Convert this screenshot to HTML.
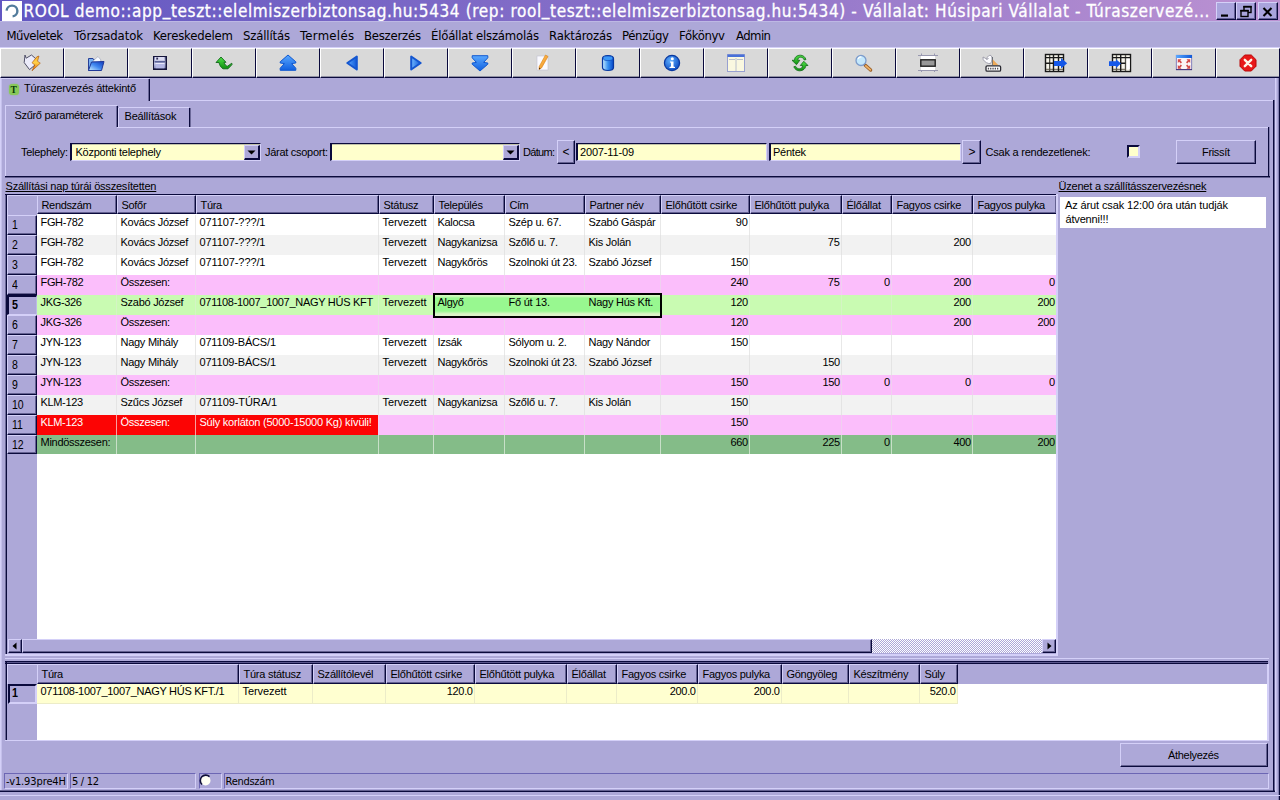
<!DOCTYPE html>
<html lang="hu"><head><meta charset="utf-8"><title>ROOL demo - Túraszervezés áttekintő</title>
<style>
html,body{margin:0;padding:0;}
body{width:1280px;height:800px;overflow:hidden;background:#ADA8D8;font-family:"Liberation Sans",sans-serif;font-size:11px;color:#000;position:relative;}
body div{position:absolute;box-sizing:border-box;}
.t{position:absolute;white-space:pre;}
svg{position:absolute;overflow:visible;}
</style></head><body>
<div style="left:0px;top:0px;width:1280px;height:21px;background:linear-gradient(90deg,#6257C2 0%,#8870C8 50%,#BC92D2 100%);"></div><div style="left:2px;top:1px;width:20px;height:20px;background:#fff;"></div><svg style="left:2px;top:1px" width="20" height="20" viewBox="0 0 20 20"><path d="M4.6 9.6 A5.4 5.4 0 1 1 10.6 15.4" fill="none" stroke="#527C9C" stroke-width="2.4"/></svg><span class="t" style="left:23.50px;top:0.62px;line-height:21px;font-size:17px;color:#fff;font-family:'DejaVu Sans Condensed','Liberation Sans',sans-serif;letter-spacing:0.617px;-webkit-text-stroke:.3px #fff;">ROOL demo::app<span style="position:relative;top:-1.5px">_</span>teszt::elelmiszerbiztonsag.hu:5434 (rep: rool<span style="position:relative;top:-1.5px">_</span>teszt::elelmiszerbiztonsag.hu:5434) - Vállalat: Húsipari Vállalat - Túraszervezé...</span><div style="left:0px;top:21px;width:1280px;height:1px;background:#BDB8E4;"></div><div style="left:1216px;top:2px;width:20px;height:18px;background:#A9A4DC;border-top:1px solid #D4D0F8;border-left:1px solid #D4D0F8;border-bottom:1px solid #0A0A3C;border-right:1px solid #0A0A3C;box-shadow:inset -1px -1px 0 rgba(10,10,60,.45);"></div><div style="left:1236px;top:2px;width:20px;height:18px;background:#A9A4DC;border-top:1px solid #D4D0F8;border-left:1px solid #D4D0F8;border-bottom:1px solid #0A0A3C;border-right:1px solid #0A0A3C;box-shadow:inset -1px -1px 0 rgba(10,10,60,.45);"></div><div style="left:1258px;top:2px;width:20px;height:18px;background:#A9A4DC;border-top:1px solid #D4D0F8;border-left:1px solid #D4D0F8;border-bottom:1px solid #0A0A3C;border-right:1px solid #0A0A3C;box-shadow:inset -1px -1px 0 rgba(10,10,60,.45);"></div><svg style="left:1216px;top:2.5px" width="64" height="17" viewBox="0 0 64 17"><rect x="5" y="11.5" width="7" height="2.2" fill="#000"/><rect x="28" y="3.5" width="7" height="6" fill="none" stroke="#000" stroke-width="1.4"/><rect x="27.3" y="3" width="8.4" height="1.6" fill="#000"/><rect x="25" y="7.5" width="7" height="6" fill="#A9A4DC" stroke="#000" stroke-width="1.4"/><rect x="24.3" y="7" width="8.4" height="1.6" fill="#000"/><path d="M47.5 5 L55.5 13 M55.5 5 L47.5 13" stroke="#000" stroke-width="2.1"/></svg><span class="t" style="left:6.50px;top:26.50px;line-height:17px;font-size:13px;color:#000;font-family:'DejaVu Sans Condensed','Liberation Sans',sans-serif;letter-spacing:-0.518px;">Műveletek</span><span class="t" style="left:74.00px;top:26.50px;line-height:17px;font-size:13px;color:#000;font-family:'DejaVu Sans Condensed','Liberation Sans',sans-serif;letter-spacing:-0.091px;">Törzsadatok</span><span class="t" style="left:153.00px;top:26.50px;line-height:17px;font-size:13px;color:#000;font-family:'DejaVu Sans Condensed','Liberation Sans',sans-serif;letter-spacing:-0.183px;">Kereskedelem</span><span class="t" style="left:243.00px;top:26.50px;line-height:17px;font-size:13px;color:#000;font-family:'DejaVu Sans Condensed','Liberation Sans',sans-serif;letter-spacing:-0.166px;">Szállítás</span><span class="t" style="left:300.00px;top:26.50px;line-height:17px;font-size:13px;color:#000;font-family:'DejaVu Sans Condensed','Liberation Sans',sans-serif;letter-spacing:0.308px;">Termelés</span><span class="t" style="left:364.00px;top:26.50px;line-height:17px;font-size:13px;color:#000;font-family:'DejaVu Sans Condensed','Liberation Sans',sans-serif;letter-spacing:-0.236px;">Beszerzés</span><span class="t" style="left:431.00px;top:26.50px;line-height:17px;font-size:13px;color:#000;font-family:'DejaVu Sans Condensed','Liberation Sans',sans-serif;letter-spacing:-0.213px;">Élőállat elszámolás</span><span class="t" style="left:549.00px;top:26.50px;line-height:17px;font-size:13px;color:#000;font-family:'DejaVu Sans Condensed','Liberation Sans',sans-serif;letter-spacing:-0.179px;">Raktározás</span><span class="t" style="left:622.00px;top:26.50px;line-height:17px;font-size:13px;color:#000;font-family:'DejaVu Sans Condensed','Liberation Sans',sans-serif;letter-spacing:-0.352px;">Pénzügy</span><span class="t" style="left:679.00px;top:26.50px;line-height:17px;font-size:13px;color:#000;font-family:'DejaVu Sans Condensed','Liberation Sans',sans-serif;letter-spacing:-0.357px;">Főkönyv</span><span class="t" style="left:736.00px;top:26.50px;line-height:17px;font-size:13px;color:#000;font-family:'DejaVu Sans Condensed','Liberation Sans',sans-serif;letter-spacing:-0.566px;">Admin</span><div style="left:0px;top:47px;width:1280px;height:1px;background:#D4D0F8;"></div><div style="left:0px;top:48px;width:64px;height:30px;background:#D9D9D9;border-top:1px solid #fff;border-left:1px solid #fff;border-right:1px solid #0A0A3C;border-bottom:1px solid #0A0A3C;box-shadow:inset 0 -1px 0 rgba(10,10,60,.35);"></div><div style="left:64px;top:48px;width:64px;height:30px;background:#D9D9D9;border-top:1px solid #fff;border-left:1px solid #fff;border-right:1px solid #0A0A3C;border-bottom:1px solid #0A0A3C;box-shadow:inset 0 -1px 0 rgba(10,10,60,.35);"></div><div style="left:128px;top:48px;width:64px;height:30px;background:#D9D9D9;border-top:1px solid #fff;border-left:1px solid #fff;border-right:1px solid #0A0A3C;border-bottom:1px solid #0A0A3C;box-shadow:inset 0 -1px 0 rgba(10,10,60,.35);"></div><div style="left:192px;top:48px;width:64px;height:30px;background:#D9D9D9;border-top:1px solid #fff;border-left:1px solid #fff;border-right:1px solid #0A0A3C;border-bottom:1px solid #0A0A3C;box-shadow:inset 0 -1px 0 rgba(10,10,60,.35);"></div><div style="left:256px;top:48px;width:64px;height:30px;background:#D9D9D9;border-top:1px solid #fff;border-left:1px solid #fff;border-right:1px solid #0A0A3C;border-bottom:1px solid #0A0A3C;box-shadow:inset 0 -1px 0 rgba(10,10,60,.35);"></div><div style="left:320px;top:48px;width:64px;height:30px;background:#D9D9D9;border-top:1px solid #fff;border-left:1px solid #fff;border-right:1px solid #0A0A3C;border-bottom:1px solid #0A0A3C;box-shadow:inset 0 -1px 0 rgba(10,10,60,.35);"></div><div style="left:384px;top:48px;width:64px;height:30px;background:#D9D9D9;border-top:1px solid #fff;border-left:1px solid #fff;border-right:1px solid #0A0A3C;border-bottom:1px solid #0A0A3C;box-shadow:inset 0 -1px 0 rgba(10,10,60,.35);"></div><div style="left:448px;top:48px;width:64px;height:30px;background:#D9D9D9;border-top:1px solid #fff;border-left:1px solid #fff;border-right:1px solid #0A0A3C;border-bottom:1px solid #0A0A3C;box-shadow:inset 0 -1px 0 rgba(10,10,60,.35);"></div><div style="left:512px;top:48px;width:64px;height:30px;background:#D9D9D9;border-top:1px solid #fff;border-left:1px solid #fff;border-right:1px solid #0A0A3C;border-bottom:1px solid #0A0A3C;box-shadow:inset 0 -1px 0 rgba(10,10,60,.35);"></div><div style="left:576px;top:48px;width:64px;height:30px;background:#D9D9D9;border-top:1px solid #fff;border-left:1px solid #fff;border-right:1px solid #0A0A3C;border-bottom:1px solid #0A0A3C;box-shadow:inset 0 -1px 0 rgba(10,10,60,.35);"></div><div style="left:640px;top:48px;width:64px;height:30px;background:#D9D9D9;border-top:1px solid #fff;border-left:1px solid #fff;border-right:1px solid #0A0A3C;border-bottom:1px solid #0A0A3C;box-shadow:inset 0 -1px 0 rgba(10,10,60,.35);"></div><div style="left:704px;top:48px;width:64px;height:30px;background:#D9D9D9;border-top:1px solid #fff;border-left:1px solid #fff;border-right:1px solid #0A0A3C;border-bottom:1px solid #0A0A3C;box-shadow:inset 0 -1px 0 rgba(10,10,60,.35);"></div><div style="left:768px;top:48px;width:64px;height:30px;background:#D9D9D9;border-top:1px solid #fff;border-left:1px solid #fff;border-right:1px solid #0A0A3C;border-bottom:1px solid #0A0A3C;box-shadow:inset 0 -1px 0 rgba(10,10,60,.35);"></div><div style="left:832px;top:48px;width:64px;height:30px;background:#D9D9D9;border-top:1px solid #fff;border-left:1px solid #fff;border-right:1px solid #0A0A3C;border-bottom:1px solid #0A0A3C;box-shadow:inset 0 -1px 0 rgba(10,10,60,.35);"></div><div style="left:896px;top:48px;width:64px;height:30px;background:#D9D9D9;border-top:1px solid #fff;border-left:1px solid #fff;border-right:1px solid #0A0A3C;border-bottom:1px solid #0A0A3C;box-shadow:inset 0 -1px 0 rgba(10,10,60,.35);"></div><div style="left:960px;top:48px;width:64px;height:30px;background:#D9D9D9;border-top:1px solid #fff;border-left:1px solid #fff;border-right:1px solid #0A0A3C;border-bottom:1px solid #0A0A3C;box-shadow:inset 0 -1px 0 rgba(10,10,60,.35);"></div><div style="left:1024px;top:48px;width:64px;height:30px;background:#D9D9D9;border-top:1px solid #fff;border-left:1px solid #fff;border-right:1px solid #0A0A3C;border-bottom:1px solid #0A0A3C;box-shadow:inset 0 -1px 0 rgba(10,10,60,.35);"></div><div style="left:1088px;top:48px;width:64px;height:30px;background:#D9D9D9;border-top:1px solid #fff;border-left:1px solid #fff;border-right:1px solid #0A0A3C;border-bottom:1px solid #0A0A3C;box-shadow:inset 0 -1px 0 rgba(10,10,60,.35);"></div><div style="left:1152px;top:48px;width:64px;height:30px;background:#D9D9D9;border-top:1px solid #fff;border-left:1px solid #fff;border-right:1px solid #0A0A3C;border-bottom:1px solid #0A0A3C;box-shadow:inset 0 -1px 0 rgba(10,10,60,.35);"></div><div style="left:1216px;top:48px;width:64px;height:30px;background:#D9D9D9;border-top:1px solid #fff;border-left:1px solid #fff;border-right:1px solid #0A0A3C;border-bottom:1px solid #0A0A3C;box-shadow:inset 0 -1px 0 rgba(10,10,60,.35);"></div><svg style="left:0;top:48px" width="1280" height="30" viewBox="0 48 1280 30"><defs><linearGradient id="gb" x1="0" y1="0" x2="0" y2="1"><stop offset="0" stop-color="#5AA8FF"/><stop offset="1" stop-color="#1060E0"/></linearGradient><linearGradient id="gbh" x1="0" y1="0" x2="1" y2="0"><stop offset="0" stop-color="#5AA8FF"/><stop offset="1" stop-color="#1058D8"/></linearGradient><linearGradient id="gbh2" x1="0" y1="0" x2="1" y2="0"><stop offset="0" stop-color="#70B8FF"/><stop offset="1" stop-color="#1058D8"/></linearGradient><linearGradient id="gbolt" x1="0" y1="0" x2="0" y2="1"><stop offset="0" stop-color="#F8B030"/><stop offset=".45" stop-color="#FFD048"/><stop offset="1" stop-color="#E06000"/></linearGradient><linearGradient id="gg" x1="0" y1="0" x2="0" y2="1"><stop offset="0" stop-color="#50E048"/><stop offset="1" stop-color="#109010"/></linearGradient><linearGradient id="gf" x1="0" y1="0" x2="0" y2="1"><stop offset="0" stop-color="#7078A8"/><stop offset=".5" stop-color="#C8CCE8"/><stop offset="1" stop-color="#8088B8"/></linearGradient><linearGradient id="gfo" x1="0" y1="1" x2="1" y2="0"><stop offset="0" stop-color="#D0F0FF"/><stop offset=".5" stop-color="#4088F0"/><stop offset="1" stop-color="#1038B8"/></linearGradient><radialGradient id="gi" cx=".4" cy=".35" r=".7"><stop offset="0" stop-color="#60B0FF"/><stop offset="1" stop-color="#0848C0"/></radialGradient><linearGradient id="gc" x1="0" y1="0" x2="1" y2="0"><stop offset="0" stop-color="#C8ECFF"/><stop offset=".5" stop-color="#3890F0"/><stop offset="1" stop-color="#0848C8"/></linearGradient><linearGradient id="go" x1="0" y1="0" x2="1" y2="1"><stop offset="0" stop-color="#FFD868"/><stop offset="1" stop-color="#F07810"/></linearGradient></defs><path d="M25 55 L26.2 58.2 L31.5 55 L35.5 58.5 L35 65 L29.5 69.6 L24.2 62.6 Z" fill="#ECECFA" stroke="#505068" stroke-width="1"/><path d="M36.8 56.8 L39 56 L37.5 61.2 L40.3 63.2 L32 70.8 L34.8 65 L32 62.8 Z" fill="url(#gbolt)" stroke="#A85008" stroke-width=".6"/><path d="M88.5 58.5 L93 58.5 L94 60 L100 60 L100 70.5 L88.5 70.5 Z" fill="#78B0F0" stroke="#284098" stroke-width="1"/><path d="M92.5 61.5 L98 56.5 L101 60 L100 63 Z" fill="#F8FAFF" stroke="#8890A8" stroke-width=".5"/><path d="M91.5 62 L104 61.5 L101.5 70.5 L88.5 70.5 Z" fill="url(#gfo)" stroke="#203898" stroke-width="1"/><rect x="153" y="56" width="14" height="14" fill="#15153A"/><rect x="154" y="57" width="11.5" height="11.3" fill="url(#gf)"/><rect x="155" y="57" width="9.5" height="3.6" fill="#DCDCF2"/><rect x="156.3" y="57.6" width="1.8" height="2" fill="#303058"/><rect x="154.5" y="61" width="10.5" height="1.6" fill="#5C6498"/><rect x="155.5" y="63" width="8.8" height="5.3" fill="#B4B8E4"/><rect x="155.5" y="63" width="8.8" height="1" fill="#E8E8FA"/><path d="M221 57 L226 62.3 L224 62.3 C224.5 64.5 226 66 227.6 66.2 L231.8 63.2 L232 64.6 L228 68.8 L223 68.8 C220.5 67 219.5 65 219 62.5 L216 62.5 Z" fill="url(#gg)" stroke="#106818" stroke-width=".9" stroke-linejoin="round"/><path d="M288 55 L295.8 61.8 L295.8 63 L291.6 63.6 L295.8 68.2 L295.8 70.3 L280.2 70.3 L280.2 68.2 L284.4 63.6 L280.2 63 L280.2 61.8 Z" fill="url(#gb)" stroke="#1058D0" stroke-width="1" stroke-linejoin="round"/><path d="M347.3 63 L356.8 56.5 L356.8 69.5 Z" fill="url(#gbh)" stroke="#1456D0" stroke-width="2" stroke-linejoin="round"/><path d="M420.7 63 L411.2 56.5 L411.2 69.5 Z" fill="url(#gbh2)" stroke="#1456D0" stroke-width="2" stroke-linejoin="round"/><path d="M480 71 L472.2 64.2 L472.2 63 L476.4 62.4 L472.2 57.8 L472.2 55.7 L487.8 55.7 L487.8 57.8 L483.6 62.4 L487.8 63 L487.8 64.2 Z" fill="url(#gb)" stroke="#1058D0" stroke-width="1" stroke-linejoin="round"/><rect x="537" y="56" width="11" height="14" fill="#FAFAFF" stroke="#C0C0D0" stroke-width=".6"/><path d="M545.5 55 L548 56.5 L541.5 68 L539 69.5 L539.2 66.5 Z" fill="url(#go)" stroke="#D88010" stroke-width=".6"/><path d="M539 69.5 L539.2 67.5 L540.6 68.4Z" fill="#402000"/><path d="M602.5 58.5 C602.5 54.5 613.5 54.5 613.5 58.5 L613.5 67.5 C613.5 71.5 602.5 71.5 602.5 67.5 Z" fill="url(#gc)" stroke="#0838A0" stroke-width="1.2"/><ellipse cx="608" cy="58.3" rx="4.8" ry="2.3" fill="#3C98F8" stroke="#0840B0" stroke-width=".6"/><circle cx="672" cy="63" r="7.6" fill="url(#gi)" stroke="#0838A0" stroke-width="1.2"/><circle cx="672.3" cy="58.7" r="1.5" fill="#fff"/><path d="M670 61.5 L673.5 61.5 L673.5 66.5 L675 67 L675 68 L669.5 68 L669.5 67 L671 66.5 L671 62.8 L670 62.5Z" fill="#fff"/><rect x="727.5" y="54.5" width="17" height="17" fill="#FAF8E0" stroke="#98A0D0" stroke-width="1"/><rect x="727.5" y="54.5" width="17" height="2.5" fill="#4870D8"/><path d="M736 58 V71 M729 59.5 H735 M737 59.5 H743" stroke="#A8B0C8" stroke-width=".8"/><path d="M792 60.3 L794.5 60.3 C794.5 57 797 55.2 800.5 55.2 C803 55.2 805 56.8 806 59.5 L804.3 60 C803.5 58 802 57.2 800.5 57.2 C798.5 57.2 797.8 58.5 797.8 60.3 L799.8 60.3 L796.5 64.7 Z" fill="url(#gg)" stroke="#106818" stroke-width=".8" stroke-linejoin="round"/><path d="M808 65.5 L805.8 65.5 C805.8 68.5 803 70.8 799.5 70.8 C797 70.8 795 69.5 793.8 66.8 L795.5 66.2 C796.5 68 798 68.8 799.5 68.8 C801.5 68.8 802.5 67.5 802.5 65.5 L800.3 65.5 L803.8 61.3 Z" fill="url(#gg)" stroke="#106818" stroke-width=".8" stroke-linejoin="round"/><path d="M865.3 65.3 L870.6 70" stroke="#9C6028" stroke-width="3.4" stroke-linecap="round"/><path d="M865.8 65.8 L870.4 69.8" stroke="#F0B468" stroke-width="1.7" stroke-linecap="round"/><circle cx="861" cy="60.5" r="5" fill="#C4E8FC" stroke="#7C9CCC" stroke-width="1.3"/><path d="M858 59 A3.4 3.4 0 0 1 861.5 57" stroke="#fff" stroke-width="1.2" fill="none"/><path d="M918 55.5 H938 M918 70.5 H938 M921.5 53.5 V72 M934.5 53.5 V72" stroke="#9898B0" stroke-width="1"/><rect x="921" y="56" width="14" height="14" fill="#fff"/><rect x="920.8" y="59.8" width="14.4" height="6.4" fill="#989898" stroke="#202020" stroke-width="1.4"/><path d="M983 57 C984.5 57.5 985.5 58.5 986.5 59 C987.5 56 989.5 54.8 991 55.5 C992.5 57 992.3 61 990.5 63.5 C988 64 984.5 62 983.2 59.5 Z" fill="#FCFCFF" stroke="#9090A0" stroke-width=".8"/><path d="M986.5 59.5 L988.5 58.5" stroke="#707080" stroke-width=".8"/><path d="M992.5 57 V65" stroke="#505860" stroke-width=".8"/><path d="M992.8 59.5 L998.5 65.3 L992.8 65.3 Z" fill="#F0A040" opacity=".85"/><rect x="986" y="65.8" width="14.6" height="5.4" rx="1.2" fill="#fff" stroke="#282830" stroke-width="1.3"/><path d="M987.8 68.6 H999" stroke="#505058" stroke-width="1.6" stroke-dasharray="1.3 1"/><rect x="1045.5" y="54.5" width="18" height="17" fill="#F6F4EA" stroke="#181818" stroke-width="1.4"/><rect x="1049" y="55" width="1.3" height="16" fill="#505048"/><path d="M1046 69.3 H1063" stroke="#605848" stroke-width="1"/><path d="M1045 57.6 H1064 M1045 63.3 H1064 M1053.5 54 V72 M1058.5 54 V72" stroke="#181818" stroke-width="1.4"/><path d="M1054 61 L1061 61 L1061 58 L1067.2 63.3 L1061 68.6 L1061 66 L1054 66 Z" fill="#1458E8"/><rect x="1112.5" y="54.5" width="18" height="17" fill="#F6F4EA" stroke="#181818" stroke-width="1.4"/><rect x="1126.2" y="58.3" width="3.6" height="10.7" fill="#fff"/><path d="M1116.5 55 V71 M1125.5 55 V71" stroke="#505048" stroke-width="1.3"/><path d="M1113 69.3 H1126" stroke="#605848" stroke-width="1"/><path d="M1112 57.6 H1131 M1121 63.3 H1125.5 M1120.7 54 V72" stroke="#181818" stroke-width="1.4"/><path d="M1109 61.3 L1116 61.3 L1116 59.3 L1121 63.6 L1116 68 L1116 66 L1109 66 Z" fill="#1458E8"/><rect x="1176.3" y="55.3" width="15.4" height="14.4" fill="#FBF4F6" stroke="#6868B0" stroke-width=".8"/><rect x="1176" y="55" width="16" height="3" fill="url(#gbh)"/><path d="M1176 69.6 H1192" stroke="#403078" stroke-width="1"/><g fill="#D03838" opacity=".9"><path d="M1177.8 59.3 L1181.5 59.3 L1180.3 60.6 L1182 62.3 L1180.8 63.5 L1179.1 61.8 L1177.8 63 Z"/><path d="M1190.2 59.3 L1186.5 59.3 L1187.7 60.6 L1186 62.3 L1187.2 63.5 L1188.9 61.8 L1190.2 63 Z"/><path d="M1177.8 68.7 L1181.5 68.7 L1180.3 67.4 L1182 65.7 L1180.8 64.5 L1179.1 66.2 L1177.8 65 Z"/><path d="M1190.2 68.7 L1186.5 68.7 L1187.7 67.4 L1186 65.7 L1187.2 64.5 L1188.9 66.2 L1190.2 65 Z"/></g><path d="M1244.7 55 L1251.3 55 L1256 59.7 L1256 66.3 L1251.3 71 L1244.7 71 L1240 66.3 L1240 59.7 Z" fill="#E81818" stroke="#B80808" stroke-width="1"/><path d="M1244.8 59.8 L1251.2 66.2 M1251.2 59.8 L1244.8 66.2" stroke="#FFF4E8" stroke-width="2.4" stroke-linecap="round"/></svg><div style="left:0px;top:78px;width:1px;height:712px;background:#D4D0F8;"></div><div style="left:1px;top:78px;width:1px;height:712px;background:rgba(212,208,248,.6);"></div><div style="left:149px;top:100px;width:1125px;height:1px;background:#D4D0F8;"></div><div style="left:1273px;top:100px;width:1px;height:691px;background:#0A0A3C;"></div><div style="left:1274px;top:100px;width:1px;height:691px;background:rgba(10,10,60,.45);"></div><div style="left:1275px;top:78px;width:1px;height:714px;background:#D4D0F8;"></div><div style="left:1276px;top:78px;width:1px;height:714px;background:rgba(212,208,248,.45);"></div><div style="left:1279px;top:78px;width:1px;height:722px;background:#0A0A3C;"></div><div style="left:1278px;top:78px;width:1px;height:722px;background:rgba(10,10,60,.25);"></div><div style="left:0px;top:78px;width:149px;height:1px;background:#D4D0F8;"></div><div style="left:148px;top:79px;width:1px;height:22px;background:rgba(10,10,60,.4);"></div><div style="left:149px;top:79px;width:1px;height:22px;background:#0A0A3C;"></div><div style="left:8.5px;top:84px;width:10px;height:11px;background:#84CC4C;border-radius:3.5px;box-shadow:0 0 1.5px #84CC4C;opacity:.9;"></div><span class="t" style="left:10.40px;top:84.34px;line-height:13.5px;font-size:9.5px;color:#083808;font-family:'Liberation Serif',serif;font-weight:bold;">T</span><span class="t" style="left:24.00px;top:81.19px;line-height:15px;font-size:11px;color:#000;letter-spacing:-0.217px;">Túraszervezés áttekintő</span><div style="left:117px;top:127px;width:1151px;height:1px;background:#D4D0F8;"></div><div style="left:5px;top:105px;width:1px;height:72px;background:#D4D0F8;"></div><div style="left:5px;top:176px;width:1265px;height:1px;background:#0A0A3C;"></div><div style="left:5px;top:177px;width:1265px;height:1px;background:rgba(10,10,60,.45);"></div><div style="left:1268px;top:127px;width:1px;height:50px;background:#0A0A3C;"></div><div style="left:1269px;top:127px;width:1px;height:51px;background:rgba(10,10,60,.25);"></div><div style="left:6px;top:105px;width:111px;height:1px;background:#D4D0F8;"></div><div style="left:116px;top:106px;width:1px;height:21px;background:rgba(10,10,60,.4);"></div><div style="left:117px;top:106px;width:1px;height:21px;background:#0A0A3C;"></div><span class="t" style="left:14.50px;top:108.19px;line-height:15px;font-size:11px;color:#000;letter-spacing:-0.315px;">Szűrő paraméterek</span><div style="left:119px;top:107px;width:70px;height:1px;background:#D4D0F8;"></div><div style="left:118px;top:108px;width:1px;height:19px;background:#D4D0F8;"></div><div style="left:189px;top:108px;width:1px;height:19px;background:#0A0A3C;"></div><div style="left:190px;top:108px;width:1px;height:19px;background:rgba(10,10,60,.4);"></div><span class="t" style="left:124.50px;top:109.19px;line-height:15px;font-size:11px;color:#000;letter-spacing:-0.181px;">Beállítások</span><span class="t" style="left:21.00px;top:144.69px;line-height:15px;font-size:11px;color:#000;letter-spacing:-0.283px;">Telephely:</span><div style="left:70px;top:143px;width:191px;height:18px;background:#FFFFCC;border-top:1px solid #0A0A3C;border-left:2px solid #0A0A3C;border-bottom:1px solid #D4D0F8;border-right:1px solid #D4D0F8;box-shadow:inset 0 1px 0 rgba(10,10,60,.25);"></div><span class="t" style="left:75.50px;top:144.69px;line-height:15px;font-size:11px;color:#000;letter-spacing:-0.259px;">Központi telephely</span><div style="left:244px;top:145px;width:16px;height:15px;background:#ADA8D8;border-top:1px solid #D4D0F8;border-left:1px solid #D4D0F8;border-right:2px solid #0A0A3C;border-bottom:2px solid #0A0A3C;"></div><svg style="left:247px;top:150px" width="9" height="5"><path d="M0.5 0.5 L8.5 0.5 L4.5 4.5 Z" fill="#000"/></svg><span class="t" style="left:265.00px;top:144.69px;line-height:15px;font-size:11px;color:#000;letter-spacing:-0.280px;">Járat csoport:</span><div style="left:330px;top:143px;width:190px;height:18px;background:#FFFFCC;border-top:1px solid #0A0A3C;border-left:2px solid #0A0A3C;border-bottom:1px solid #D4D0F8;border-right:1px solid #D4D0F8;box-shadow:inset 0 1px 0 rgba(10,10,60,.25);"></div><div style="left:503px;top:145px;width:16px;height:15px;background:#ADA8D8;border-top:1px solid #D4D0F8;border-left:1px solid #D4D0F8;border-right:2px solid #0A0A3C;border-bottom:2px solid #0A0A3C;"></div><svg style="left:506px;top:150px" width="9" height="5"><path d="M0.5 0.5 L8.5 0.5 L4.5 4.5 Z" fill="#000"/></svg><span class="t" style="left:523.00px;top:144.69px;line-height:15px;font-size:11px;color:#000;letter-spacing:-0.694px;">Dátum:</span><div style="left:557px;top:140px;width:18px;height:24px;background:#ADA8D8;border-top:1px solid #D4D0F8;border-left:1px solid #D4D0F8;border-bottom:1px solid #0A0A3C;border-right:1px solid #0A0A3C;box-shadow:inset -1px -1px 0 rgba(10,10,60,.45);"></div><span class="t" style="left:562.50px;top:143.84px;line-height:16px;font-size:12px;color:#000;">&lt;</span><div style="left:576px;top:143px;width:191px;height:18px;background:#FFFFCC;border-top:1px solid #0A0A3C;border-left:2px solid #0A0A3C;border-bottom:1px solid #D4D0F8;border-right:1px solid #D4D0F8;box-shadow:inset 0 1px 0 rgba(10,10,60,.25);"></div><span class="t" style="left:580.00px;top:144.69px;line-height:15px;font-size:11px;color:#000;letter-spacing:-0.161px;">2007-11-09</span><div style="left:769px;top:143px;width:192px;height:18px;background:#FFFFCC;border-top:1px solid #0A0A3C;border-left:2px solid #0A0A3C;border-bottom:1px solid #D4D0F8;border-right:1px solid #D4D0F8;box-shadow:inset 0 1px 0 rgba(10,10,60,.25);"></div><span class="t" style="left:773.00px;top:144.69px;line-height:15px;font-size:11px;color:#000;letter-spacing:-0.250px;">Péntek</span><div style="left:962px;top:140px;width:19px;height:24px;background:#ADA8D8;border-top:1px solid #D4D0F8;border-left:1px solid #D4D0F8;border-bottom:1px solid #0A0A3C;border-right:1px solid #0A0A3C;box-shadow:inset -1px -1px 0 rgba(10,10,60,.45);"></div><span class="t" style="left:968.50px;top:143.84px;line-height:16px;font-size:12px;color:#000;">&gt;</span><span class="t" style="left:985.50px;top:144.69px;line-height:15px;font-size:11px;color:#000;letter-spacing:-0.223px;">Csak a rendezetlenek:</span><div style="left:1127px;top:145px;width:13px;height:13px;background:#FFFFCC;border-top:2px solid #0A0A3C;border-left:2px solid #0A0A3C;border-bottom:2px solid #D4D0F8;border-right:2px solid #D4D0F8;"></div><div style="left:1176px;top:140px;width:80px;height:24px;background:#ADA8D8;border-top:1px solid #D4D0F8;border-left:1px solid #D4D0F8;border-bottom:1px solid #0A0A3C;border-right:1px solid #0A0A3C;box-shadow:inset -1px -1px 0 rgba(10,10,60,.45);"></div><span class="t" style="left:1202.00px;top:144.69px;line-height:15px;font-size:11px;color:#000;letter-spacing:-0.326px;">Frissít</span><span class="t" style="left:5.50px;top:178.69px;line-height:15px;font-size:11px;color:#000;letter-spacing:-0.205px;text-decoration:underline;">Szállítási nap túrái összesítetten</span><span class="t" style="left:1058.50px;top:178.69px;line-height:15px;font-size:11px;color:#000;letter-spacing:-0.210px;text-decoration:underline;">Üzenet a szállításszervezésnek</span><div style="left:5px;top:194px;width:1052px;height:1px;background:#0A0A3C;"></div><div style="left:5px;top:194px;width:1px;height:460px;background:rgba(10,10,60,.4);"></div><div style="left:6px;top:194px;width:1px;height:460px;background:#0A0A3C;"></div><div style="left:37px;top:214px;width:1019px;height:425px;background:#fff;"></div><div style="left:7px;top:195px;width:30px;height:20px;border-top:1px solid #D4D0F8;border-left:1px solid #D4D0F8;"></div><div style="left:37px;top:195px;width:80px;height:19px;background:#ADA8D8;border-top:1px solid #D4D0F8;border-left:1px solid #D4D0F8;border-bottom:1px solid #0A0A3C;border-right:1px solid #0A0A3C;box-shadow:inset -1px -1px 0 rgba(10,10,60,.45);"></div><span class="t" style="left:41.50px;top:198.19px;line-height:15px;font-size:11px;color:#000;letter-spacing:-0.338px;">Rendszám</span><div style="left:117px;top:195px;width:79px;height:19px;background:#ADA8D8;border-top:1px solid #D4D0F8;border-left:1px solid #D4D0F8;border-bottom:1px solid #0A0A3C;border-right:1px solid #0A0A3C;box-shadow:inset -1px -1px 0 rgba(10,10,60,.45);"></div><span class="t" style="left:121.50px;top:198.19px;line-height:15px;font-size:11px;color:#000;letter-spacing:-0.296px;">Sofőr</span><div style="left:196px;top:195px;width:183px;height:19px;background:#ADA8D8;border-top:1px solid #D4D0F8;border-left:1px solid #D4D0F8;border-bottom:1px solid #0A0A3C;border-right:1px solid #0A0A3C;box-shadow:inset -1px -1px 0 rgba(10,10,60,.45);"></div><span class="t" style="left:200.50px;top:198.19px;line-height:15px;font-size:11px;color:#000;letter-spacing:-0.339px;">Túra</span><div style="left:379px;top:195px;width:55px;height:19px;background:#ADA8D8;border-top:1px solid #D4D0F8;border-left:1px solid #D4D0F8;border-bottom:1px solid #0A0A3C;border-right:1px solid #0A0A3C;box-shadow:inset -1px -1px 0 rgba(10,10,60,.45);"></div><span class="t" style="left:383.50px;top:198.19px;line-height:15px;font-size:11px;color:#000;letter-spacing:-0.275px;">Státusz</span><div style="left:434px;top:195px;width:71px;height:19px;background:#ADA8D8;border-top:1px solid #D4D0F8;border-left:1px solid #D4D0F8;border-bottom:1px solid #0A0A3C;border-right:1px solid #0A0A3C;box-shadow:inset -1px -1px 0 rgba(10,10,60,.45);"></div><span class="t" style="left:438.50px;top:198.19px;line-height:15px;font-size:11px;color:#000;letter-spacing:-0.261px;">Település</span><div style="left:505px;top:195px;width:80px;height:19px;background:#ADA8D8;border-top:1px solid #D4D0F8;border-left:1px solid #D4D0F8;border-bottom:1px solid #0A0A3C;border-right:1px solid #0A0A3C;box-shadow:inset -1px -1px 0 rgba(10,10,60,.45);"></div><span class="t" style="left:509.50px;top:198.19px;line-height:15px;font-size:11px;color:#000;letter-spacing:-0.454px;">Cím</span><div style="left:585px;top:195px;width:76px;height:19px;background:#ADA8D8;border-top:1px solid #D4D0F8;border-left:1px solid #D4D0F8;border-bottom:1px solid #0A0A3C;border-right:1px solid #0A0A3C;box-shadow:inset -1px -1px 0 rgba(10,10,60,.45);"></div><span class="t" style="left:589.50px;top:198.19px;line-height:15px;font-size:11px;color:#000;letter-spacing:-0.256px;">Partner név</span><div style="left:661px;top:195px;width:89px;height:19px;background:#ADA8D8;border-top:1px solid #D4D0F8;border-left:1px solid #D4D0F8;border-bottom:1px solid #0A0A3C;border-right:1px solid #0A0A3C;box-shadow:inset -1px -1px 0 rgba(10,10,60,.45);"></div><span class="t" style="left:665.50px;top:198.19px;line-height:15px;font-size:11px;color:#000;letter-spacing:-0.226px;">Előhűtött csirke</span><div style="left:750px;top:195px;width:92px;height:19px;background:#ADA8D8;border-top:1px solid #D4D0F8;border-left:1px solid #D4D0F8;border-bottom:1px solid #0A0A3C;border-right:1px solid #0A0A3C;box-shadow:inset -1px -1px 0 rgba(10,10,60,.45);"></div><span class="t" style="left:754.50px;top:198.19px;line-height:15px;font-size:11px;color:#000;letter-spacing:-0.235px;">Előhűtött pulyka</span><div style="left:842px;top:195px;width:50px;height:19px;background:#ADA8D8;border-top:1px solid #D4D0F8;border-left:1px solid #D4D0F8;border-bottom:1px solid #0A0A3C;border-right:1px solid #0A0A3C;box-shadow:inset -1px -1px 0 rgba(10,10,60,.45);"></div><span class="t" style="left:846.50px;top:198.19px;line-height:15px;font-size:11px;color:#000;letter-spacing:-0.232px;">Élőállat</span><div style="left:892px;top:195px;width:81px;height:19px;background:#ADA8D8;border-top:1px solid #D4D0F8;border-left:1px solid #D4D0F8;border-bottom:1px solid #0A0A3C;border-right:1px solid #0A0A3C;box-shadow:inset -1px -1px 0 rgba(10,10,60,.45);"></div><span class="t" style="left:896.50px;top:198.19px;line-height:15px;font-size:11px;color:#000;letter-spacing:-0.254px;">Fagyos csirke</span><div style="left:973px;top:195px;width:84px;height:19px;background:#ADA8D8;border-top:1px solid #D4D0F8;border-left:1px solid #D4D0F8;border-bottom:1px solid #0A0A3C;border-right:1px solid #0A0A3C;box-shadow:inset -1px -1px 0 rgba(10,10,60,.45);"></div><span class="t" style="left:977.50px;top:198.19px;line-height:15px;font-size:11px;color:#000;letter-spacing:-0.266px;">Fagyos pulyka</span><div style="left:37px;top:215px;width:1019px;height:20px;background:#FFFFFF;"></div><div style="left:7px;top:215px;width:30px;height:20px;background:#ADA8D8;border-top:1px solid #D4D0F8;border-left:1px solid #D4D0F8;border-bottom:1px solid #0A0A3C;border-right:1px solid #0A0A3C;box-shadow:inset -1px -1px 0 rgba(10,10,60,.45);"></div><div style="left:116px;top:215px;width:1px;height:20px;background:#E8E8E8;"></div><div style="left:195px;top:215px;width:1px;height:20px;background:#E8E8E8;"></div><div style="left:378px;top:215px;width:1px;height:20px;background:#E8E8E8;"></div><div style="left:433px;top:215px;width:1px;height:20px;background:#E8E8E8;"></div><div style="left:504px;top:215px;width:1px;height:20px;background:#E8E8E8;"></div><div style="left:584px;top:215px;width:1px;height:20px;background:#E8E8E8;"></div><div style="left:660px;top:215px;width:1px;height:20px;background:#E8E8E8;"></div><div style="left:749px;top:215px;width:1px;height:20px;background:#E8E8E8;"></div><div style="left:841px;top:215px;width:1px;height:20px;background:#E8E8E8;"></div><div style="left:891px;top:215px;width:1px;height:20px;background:#E8E8E8;"></div><div style="left:972px;top:215px;width:1px;height:20px;background:#E8E8E8;"></div><div style="left:1056px;top:215px;width:1px;height:20px;background:#E8E8E8;"></div><div style="left:37px;top:235px;width:1019px;height:20px;background:#F2F2F2;"></div><div style="left:7px;top:235px;width:30px;height:20px;background:#ADA8D8;border-top:1px solid #D4D0F8;border-left:1px solid #D4D0F8;border-bottom:1px solid #0A0A3C;border-right:1px solid #0A0A3C;box-shadow:inset -1px -1px 0 rgba(10,10,60,.45);"></div><div style="left:116px;top:235px;width:1px;height:20px;background:#E4E4E4;"></div><div style="left:195px;top:235px;width:1px;height:20px;background:#E4E4E4;"></div><div style="left:378px;top:235px;width:1px;height:20px;background:#E4E4E4;"></div><div style="left:433px;top:235px;width:1px;height:20px;background:#E4E4E4;"></div><div style="left:504px;top:235px;width:1px;height:20px;background:#E4E4E4;"></div><div style="left:584px;top:235px;width:1px;height:20px;background:#E4E4E4;"></div><div style="left:660px;top:235px;width:1px;height:20px;background:#E4E4E4;"></div><div style="left:749px;top:235px;width:1px;height:20px;background:#E4E4E4;"></div><div style="left:841px;top:235px;width:1px;height:20px;background:#E4E4E4;"></div><div style="left:891px;top:235px;width:1px;height:20px;background:#E4E4E4;"></div><div style="left:972px;top:235px;width:1px;height:20px;background:#E4E4E4;"></div><div style="left:1056px;top:235px;width:1px;height:20px;background:#E4E4E4;"></div><div style="left:37px;top:255px;width:1019px;height:20px;background:#FFFFFF;"></div><div style="left:7px;top:255px;width:30px;height:20px;background:#ADA8D8;border-top:1px solid #D4D0F8;border-left:1px solid #D4D0F8;border-bottom:1px solid #0A0A3C;border-right:1px solid #0A0A3C;box-shadow:inset -1px -1px 0 rgba(10,10,60,.45);"></div><div style="left:116px;top:255px;width:1px;height:20px;background:#E8E8E8;"></div><div style="left:195px;top:255px;width:1px;height:20px;background:#E8E8E8;"></div><div style="left:378px;top:255px;width:1px;height:20px;background:#E8E8E8;"></div><div style="left:433px;top:255px;width:1px;height:20px;background:#E8E8E8;"></div><div style="left:504px;top:255px;width:1px;height:20px;background:#E8E8E8;"></div><div style="left:584px;top:255px;width:1px;height:20px;background:#E8E8E8;"></div><div style="left:660px;top:255px;width:1px;height:20px;background:#E8E8E8;"></div><div style="left:749px;top:255px;width:1px;height:20px;background:#E8E8E8;"></div><div style="left:841px;top:255px;width:1px;height:20px;background:#E8E8E8;"></div><div style="left:891px;top:255px;width:1px;height:20px;background:#E8E8E8;"></div><div style="left:972px;top:255px;width:1px;height:20px;background:#E8E8E8;"></div><div style="left:1056px;top:255px;width:1px;height:20px;background:#E8E8E8;"></div><div style="left:37px;top:275px;width:1019px;height:20px;background:#FBBEFB;"></div><div style="left:7px;top:275px;width:30px;height:20px;background:#ADA8D8;border-top:1px solid #D4D0F8;border-left:1px solid #D4D0F8;border-bottom:1px solid #0A0A3C;border-right:1px solid #0A0A3C;box-shadow:inset -1px -1px 0 rgba(10,10,60,.45);"></div><div style="left:116px;top:275px;width:1px;height:20px;background:#F0D0F0;"></div><div style="left:195px;top:275px;width:1px;height:20px;background:#F0D0F0;"></div><div style="left:378px;top:275px;width:1px;height:20px;background:#F0D0F0;"></div><div style="left:433px;top:275px;width:1px;height:20px;background:#F0D0F0;"></div><div style="left:504px;top:275px;width:1px;height:20px;background:#F0D0F0;"></div><div style="left:584px;top:275px;width:1px;height:20px;background:#F0D0F0;"></div><div style="left:660px;top:275px;width:1px;height:20px;background:#F0D0F0;"></div><div style="left:749px;top:275px;width:1px;height:20px;background:#F0D0F0;"></div><div style="left:841px;top:275px;width:1px;height:20px;background:#F0D0F0;"></div><div style="left:891px;top:275px;width:1px;height:20px;background:#F0D0F0;"></div><div style="left:972px;top:275px;width:1px;height:20px;background:#F0D0F0;"></div><div style="left:1056px;top:275px;width:1px;height:20px;background:#F0D0F0;"></div><div style="left:37px;top:295px;width:1019px;height:20px;background:#C9FBB2;"></div><div style="left:7px;top:295px;width:30px;height:20px;border-top:2px solid #0A0A3C;border-left:2px solid #0A0A3C;border-bottom:1px solid #D4D0F8;border-right:1px solid #BDB9E6;"></div><div style="left:116px;top:295px;width:1px;height:20px;background:#D4F4C4;"></div><div style="left:195px;top:295px;width:1px;height:20px;background:#D4F4C4;"></div><div style="left:378px;top:295px;width:1px;height:20px;background:#D4F4C4;"></div><div style="left:433px;top:295px;width:1px;height:20px;background:#D4F4C4;"></div><div style="left:504px;top:295px;width:1px;height:20px;background:#D4F4C4;"></div><div style="left:584px;top:295px;width:1px;height:20px;background:#D4F4C4;"></div><div style="left:660px;top:295px;width:1px;height:20px;background:#D4F4C4;"></div><div style="left:749px;top:295px;width:1px;height:20px;background:#D4F4C4;"></div><div style="left:841px;top:295px;width:1px;height:20px;background:#D4F4C4;"></div><div style="left:891px;top:295px;width:1px;height:20px;background:#D4F4C4;"></div><div style="left:972px;top:295px;width:1px;height:20px;background:#D4F4C4;"></div><div style="left:1056px;top:295px;width:1px;height:20px;background:#D4F4C4;"></div><div style="left:37px;top:315px;width:1019px;height:20px;background:#FBBEFB;"></div><div style="left:7px;top:315px;width:30px;height:20px;background:#ADA8D8;border-top:1px solid #D4D0F8;border-left:1px solid #D4D0F8;border-bottom:1px solid #0A0A3C;border-right:1px solid #0A0A3C;box-shadow:inset -1px -1px 0 rgba(10,10,60,.45);"></div><div style="left:116px;top:315px;width:1px;height:20px;background:#F0D0F0;"></div><div style="left:195px;top:315px;width:1px;height:20px;background:#F0D0F0;"></div><div style="left:378px;top:315px;width:1px;height:20px;background:#F0D0F0;"></div><div style="left:433px;top:315px;width:1px;height:20px;background:#F0D0F0;"></div><div style="left:504px;top:315px;width:1px;height:20px;background:#F0D0F0;"></div><div style="left:584px;top:315px;width:1px;height:20px;background:#F0D0F0;"></div><div style="left:660px;top:315px;width:1px;height:20px;background:#F0D0F0;"></div><div style="left:749px;top:315px;width:1px;height:20px;background:#F0D0F0;"></div><div style="left:841px;top:315px;width:1px;height:20px;background:#F0D0F0;"></div><div style="left:891px;top:315px;width:1px;height:20px;background:#F0D0F0;"></div><div style="left:972px;top:315px;width:1px;height:20px;background:#F0D0F0;"></div><div style="left:1056px;top:315px;width:1px;height:20px;background:#F0D0F0;"></div><div style="left:37px;top:335px;width:1019px;height:20px;background:#FFFFFF;"></div><div style="left:7px;top:335px;width:30px;height:20px;background:#ADA8D8;border-top:1px solid #D4D0F8;border-left:1px solid #D4D0F8;border-bottom:1px solid #0A0A3C;border-right:1px solid #0A0A3C;box-shadow:inset -1px -1px 0 rgba(10,10,60,.45);"></div><div style="left:116px;top:335px;width:1px;height:20px;background:#E8E8E8;"></div><div style="left:195px;top:335px;width:1px;height:20px;background:#E8E8E8;"></div><div style="left:378px;top:335px;width:1px;height:20px;background:#E8E8E8;"></div><div style="left:433px;top:335px;width:1px;height:20px;background:#E8E8E8;"></div><div style="left:504px;top:335px;width:1px;height:20px;background:#E8E8E8;"></div><div style="left:584px;top:335px;width:1px;height:20px;background:#E8E8E8;"></div><div style="left:660px;top:335px;width:1px;height:20px;background:#E8E8E8;"></div><div style="left:749px;top:335px;width:1px;height:20px;background:#E8E8E8;"></div><div style="left:841px;top:335px;width:1px;height:20px;background:#E8E8E8;"></div><div style="left:891px;top:335px;width:1px;height:20px;background:#E8E8E8;"></div><div style="left:972px;top:335px;width:1px;height:20px;background:#E8E8E8;"></div><div style="left:1056px;top:335px;width:1px;height:20px;background:#E8E8E8;"></div><div style="left:37px;top:355px;width:1019px;height:20px;background:#F2F2F2;"></div><div style="left:7px;top:355px;width:30px;height:20px;background:#ADA8D8;border-top:1px solid #D4D0F8;border-left:1px solid #D4D0F8;border-bottom:1px solid #0A0A3C;border-right:1px solid #0A0A3C;box-shadow:inset -1px -1px 0 rgba(10,10,60,.45);"></div><div style="left:116px;top:355px;width:1px;height:20px;background:#E4E4E4;"></div><div style="left:195px;top:355px;width:1px;height:20px;background:#E4E4E4;"></div><div style="left:378px;top:355px;width:1px;height:20px;background:#E4E4E4;"></div><div style="left:433px;top:355px;width:1px;height:20px;background:#E4E4E4;"></div><div style="left:504px;top:355px;width:1px;height:20px;background:#E4E4E4;"></div><div style="left:584px;top:355px;width:1px;height:20px;background:#E4E4E4;"></div><div style="left:660px;top:355px;width:1px;height:20px;background:#E4E4E4;"></div><div style="left:749px;top:355px;width:1px;height:20px;background:#E4E4E4;"></div><div style="left:841px;top:355px;width:1px;height:20px;background:#E4E4E4;"></div><div style="left:891px;top:355px;width:1px;height:20px;background:#E4E4E4;"></div><div style="left:972px;top:355px;width:1px;height:20px;background:#E4E4E4;"></div><div style="left:1056px;top:355px;width:1px;height:20px;background:#E4E4E4;"></div><div style="left:37px;top:375px;width:1019px;height:20px;background:#FBBEFB;"></div><div style="left:7px;top:375px;width:30px;height:20px;background:#ADA8D8;border-top:1px solid #D4D0F8;border-left:1px solid #D4D0F8;border-bottom:1px solid #0A0A3C;border-right:1px solid #0A0A3C;box-shadow:inset -1px -1px 0 rgba(10,10,60,.45);"></div><div style="left:116px;top:375px;width:1px;height:20px;background:#F0D0F0;"></div><div style="left:195px;top:375px;width:1px;height:20px;background:#F0D0F0;"></div><div style="left:378px;top:375px;width:1px;height:20px;background:#F0D0F0;"></div><div style="left:433px;top:375px;width:1px;height:20px;background:#F0D0F0;"></div><div style="left:504px;top:375px;width:1px;height:20px;background:#F0D0F0;"></div><div style="left:584px;top:375px;width:1px;height:20px;background:#F0D0F0;"></div><div style="left:660px;top:375px;width:1px;height:20px;background:#F0D0F0;"></div><div style="left:749px;top:375px;width:1px;height:20px;background:#F0D0F0;"></div><div style="left:841px;top:375px;width:1px;height:20px;background:#F0D0F0;"></div><div style="left:891px;top:375px;width:1px;height:20px;background:#F0D0F0;"></div><div style="left:972px;top:375px;width:1px;height:20px;background:#F0D0F0;"></div><div style="left:1056px;top:375px;width:1px;height:20px;background:#F0D0F0;"></div><div style="left:37px;top:395px;width:1019px;height:20px;background:#F2F2F2;"></div><div style="left:7px;top:395px;width:30px;height:20px;background:#ADA8D8;border-top:1px solid #D4D0F8;border-left:1px solid #D4D0F8;border-bottom:1px solid #0A0A3C;border-right:1px solid #0A0A3C;box-shadow:inset -1px -1px 0 rgba(10,10,60,.45);"></div><div style="left:116px;top:395px;width:1px;height:20px;background:#E4E4E4;"></div><div style="left:195px;top:395px;width:1px;height:20px;background:#E4E4E4;"></div><div style="left:378px;top:395px;width:1px;height:20px;background:#E4E4E4;"></div><div style="left:433px;top:395px;width:1px;height:20px;background:#E4E4E4;"></div><div style="left:504px;top:395px;width:1px;height:20px;background:#E4E4E4;"></div><div style="left:584px;top:395px;width:1px;height:20px;background:#E4E4E4;"></div><div style="left:660px;top:395px;width:1px;height:20px;background:#E4E4E4;"></div><div style="left:749px;top:395px;width:1px;height:20px;background:#E4E4E4;"></div><div style="left:841px;top:395px;width:1px;height:20px;background:#E4E4E4;"></div><div style="left:891px;top:395px;width:1px;height:20px;background:#E4E4E4;"></div><div style="left:972px;top:395px;width:1px;height:20px;background:#E4E4E4;"></div><div style="left:1056px;top:395px;width:1px;height:20px;background:#E4E4E4;"></div><div style="left:37px;top:415px;width:1019px;height:20px;background:#FBBEFB;"></div><div style="left:37px;top:415px;width:342px;height:20px;background:#FC0404;"></div><div style="left:7px;top:415px;width:30px;height:20px;background:#ADA8D8;border-top:1px solid #D4D0F8;border-left:1px solid #D4D0F8;border-bottom:1px solid #0A0A3C;border-right:1px solid #0A0A3C;box-shadow:inset -1px -1px 0 rgba(10,10,60,.45);"></div><div style="left:116px;top:415px;width:1px;height:20px;background:#F8A0A0;"></div><div style="left:195px;top:415px;width:1px;height:20px;background:#F8A0A0;"></div><div style="left:378px;top:415px;width:1px;height:20px;background:#F0D0F0;"></div><div style="left:433px;top:415px;width:1px;height:20px;background:#F0D0F0;"></div><div style="left:504px;top:415px;width:1px;height:20px;background:#F0D0F0;"></div><div style="left:584px;top:415px;width:1px;height:20px;background:#F0D0F0;"></div><div style="left:660px;top:415px;width:1px;height:20px;background:#F0D0F0;"></div><div style="left:749px;top:415px;width:1px;height:20px;background:#F0D0F0;"></div><div style="left:841px;top:415px;width:1px;height:20px;background:#F0D0F0;"></div><div style="left:891px;top:415px;width:1px;height:20px;background:#F0D0F0;"></div><div style="left:972px;top:415px;width:1px;height:20px;background:#F0D0F0;"></div><div style="left:1056px;top:415px;width:1px;height:20px;background:#F0D0F0;"></div><div style="left:37px;top:435px;width:1019px;height:19px;background:#84BC88;"></div><div style="left:7px;top:435px;width:30px;height:19px;background:#ADA8D8;border-top:1px solid #D4D0F8;border-left:1px solid #D4D0F8;border-bottom:1px solid #0A0A3C;border-right:1px solid #0A0A3C;box-shadow:inset -1px -1px 0 rgba(10,10,60,.45);"></div><div style="left:116px;top:435px;width:1px;height:19px;background:#C8E0C8;"></div><div style="left:195px;top:435px;width:1px;height:19px;background:#C8E0C8;"></div><div style="left:378px;top:435px;width:1px;height:19px;background:#C8E0C8;"></div><div style="left:433px;top:435px;width:1px;height:19px;background:#C8E0C8;"></div><div style="left:504px;top:435px;width:1px;height:19px;background:#C8E0C8;"></div><div style="left:584px;top:435px;width:1px;height:19px;background:#C8E0C8;"></div><div style="left:660px;top:435px;width:1px;height:19px;background:#C8E0C8;"></div><div style="left:749px;top:435px;width:1px;height:19px;background:#C8E0C8;"></div><div style="left:841px;top:435px;width:1px;height:19px;background:#C8E0C8;"></div><div style="left:891px;top:435px;width:1px;height:19px;background:#C8E0C8;"></div><div style="left:972px;top:435px;width:1px;height:19px;background:#C8E0C8;"></div><div style="left:1056px;top:435px;width:1px;height:19px;background:#C8E0C8;"></div><div style="left:433px;top:293px;width:229px;height:25px;border:2px solid #000;background:linear-gradient(180deg,#D4FAC0 0px,#D4FAC0 1px,#98F890 3px,#98F890 16px,#DCF4C8 19px,#DCF4C8 21px);"></div><span class="t" style="left:12.00px;top:217.42px;line-height:16.5px;font-size:12.5px;color:#000;transform:scaleX(.84);transform-origin:0 0;">1</span><span class="t" style="left:40.50px;top:214.69px;line-height:15px;font-size:11px;color:#000;letter-spacing:-0.339px;">FGH-782</span><span class="t" style="left:120.50px;top:214.69px;line-height:15px;font-size:11px;color:#000;letter-spacing:-0.266px;">Kovács József</span><span class="t" style="left:199.50px;top:214.69px;line-height:15px;font-size:11px;color:#000;letter-spacing:-0.099px;">071107-???/1</span><span class="t" style="left:382.50px;top:214.69px;line-height:15px;font-size:11px;color:#000;letter-spacing:-0.080px;">Tervezett</span><span class="t" style="left:437.50px;top:214.69px;line-height:15px;font-size:11px;color:#000;letter-spacing:-0.294px;">Kalocsa</span><span class="t" style="left:508.50px;top:214.69px;line-height:15px;font-size:11px;color:#000;letter-spacing:-0.250px;">Szép u. 67.</span><span class="t" style="left:588.50px;top:214.69px;line-height:15px;font-size:11px;color:#000;letter-spacing:-0.288px;">Szabó Gáspár</span><span class="t" style="left:735.75px;top:214.69px;line-height:15px;font-size:11px;color:#000;">90</span><span class="t" style="left:12.00px;top:237.42px;line-height:16.5px;font-size:12.5px;color:#000;transform:scaleX(.84);transform-origin:0 0;">2</span><span class="t" style="left:40.50px;top:234.69px;line-height:15px;font-size:11px;color:#000;letter-spacing:-0.339px;">FGH-782</span><span class="t" style="left:120.50px;top:234.69px;line-height:15px;font-size:11px;color:#000;letter-spacing:-0.266px;">Kovács József</span><span class="t" style="left:199.50px;top:234.69px;line-height:15px;font-size:11px;color:#000;letter-spacing:-0.099px;">071107-???/1</span><span class="t" style="left:382.50px;top:234.69px;line-height:15px;font-size:11px;color:#000;letter-spacing:-0.080px;">Tervezett</span><span class="t" style="left:437.50px;top:234.69px;line-height:15px;font-size:11px;color:#000;letter-spacing:-0.283px;">Nagykanizsa</span><span class="t" style="left:508.50px;top:234.69px;line-height:15px;font-size:11px;color:#000;letter-spacing:-0.234px;">Szőlő u. 7.</span><span class="t" style="left:588.50px;top:234.69px;line-height:15px;font-size:11px;color:#000;letter-spacing:-0.251px;">Kis Jolán</span><span class="t" style="left:827.75px;top:234.69px;line-height:15px;font-size:11px;color:#000;">75</span><span class="t" style="left:953.47px;top:234.69px;line-height:15px;font-size:11px;color:#000;letter-spacing:-0.413px;">200</span><span class="t" style="left:12.00px;top:257.42px;line-height:16.5px;font-size:12.5px;color:#000;transform:scaleX(.84);transform-origin:0 0;">3</span><span class="t" style="left:40.50px;top:254.69px;line-height:15px;font-size:11px;color:#000;letter-spacing:-0.339px;">FGH-782</span><span class="t" style="left:120.50px;top:254.69px;line-height:15px;font-size:11px;color:#000;letter-spacing:-0.266px;">Kovács József</span><span class="t" style="left:199.50px;top:254.69px;line-height:15px;font-size:11px;color:#000;letter-spacing:-0.099px;">071107-???/1</span><span class="t" style="left:382.50px;top:254.69px;line-height:15px;font-size:11px;color:#000;letter-spacing:-0.080px;">Tervezett</span><span class="t" style="left:437.50px;top:254.69px;line-height:15px;font-size:11px;color:#000;letter-spacing:-0.296px;">Nagykőrös</span><span class="t" style="left:508.50px;top:254.69px;line-height:15px;font-size:11px;color:#000;letter-spacing:-0.232px;">Szolnoki út 23.</span><span class="t" style="left:588.50px;top:254.69px;line-height:15px;font-size:11px;color:#000;letter-spacing:-0.270px;">Szabó József</span><span class="t" style="left:730.47px;top:254.69px;line-height:15px;font-size:11px;color:#000;letter-spacing:-0.413px;">150</span><span class="t" style="left:12.00px;top:277.42px;line-height:16.5px;font-size:12.5px;color:#000;transform:scaleX(.84);transform-origin:0 0;">4</span><span class="t" style="left:40.50px;top:274.69px;line-height:15px;font-size:11px;color:#000;letter-spacing:-0.339px;">FGH-782</span><span class="t" style="left:120.50px;top:274.69px;line-height:15px;font-size:11px;color:#000;letter-spacing:-0.292px;">Összesen:</span><span class="t" style="left:730.47px;top:274.69px;line-height:15px;font-size:11px;color:#000;letter-spacing:-0.413px;">240</span><span class="t" style="left:827.75px;top:274.69px;line-height:15px;font-size:11px;color:#000;">75</span><span class="t" style="left:883.88px;top:274.69px;line-height:15px;font-size:11px;color:#000;">0</span><span class="t" style="left:953.47px;top:274.69px;line-height:15px;font-size:11px;color:#000;letter-spacing:-0.413px;">200</span><span class="t" style="left:1048.88px;top:274.69px;line-height:15px;font-size:11px;color:#000;">0</span><span class="t" style="left:11.50px;top:297.42px;line-height:16.5px;font-size:12.5px;color:#000;font-weight:bold;transform:scaleX(.86);transform-origin:0 0;">5</span><span class="t" style="left:40.50px;top:294.69px;line-height:15px;font-size:11px;color:#000;letter-spacing:-0.326px;">JKG-326</span><span class="t" style="left:120.50px;top:294.69px;line-height:15px;font-size:11px;color:#000;letter-spacing:-0.270px;">Szabó József</span><span class="t" style="left:199.50px;top:294.69px;line-height:15px;font-size:11px;color:#000;letter-spacing:-0.292px;">071108-1007_1007_NAGY HÚS KFT</span><span class="t" style="left:382.50px;top:294.69px;line-height:15px;font-size:11px;color:#000;letter-spacing:-0.080px;">Tervezett</span><span class="t" style="left:437.50px;top:294.69px;line-height:15px;font-size:11px;color:#000;letter-spacing:-0.310px;">Algyő</span><span class="t" style="left:508.50px;top:294.69px;line-height:15px;font-size:11px;color:#000;letter-spacing:-0.244px;">Fő út 13.</span><span class="t" style="left:588.50px;top:294.69px;line-height:15px;font-size:11px;color:#000;letter-spacing:-0.254px;">Nagy Hús Kft.</span><span class="t" style="left:730.47px;top:294.69px;line-height:15px;font-size:11px;color:#000;letter-spacing:-0.413px;">120</span><span class="t" style="left:953.47px;top:294.69px;line-height:15px;font-size:11px;color:#000;letter-spacing:-0.413px;">200</span><span class="t" style="left:1037.47px;top:294.69px;line-height:15px;font-size:11px;color:#000;letter-spacing:-0.413px;">200</span><span class="t" style="left:12.00px;top:317.42px;line-height:16.5px;font-size:12.5px;color:#000;transform:scaleX(.84);transform-origin:0 0;">6</span><span class="t" style="left:40.50px;top:314.69px;line-height:15px;font-size:11px;color:#000;letter-spacing:-0.326px;">JKG-326</span><span class="t" style="left:120.50px;top:314.69px;line-height:15px;font-size:11px;color:#000;letter-spacing:-0.292px;">Összesen:</span><span class="t" style="left:730.47px;top:314.69px;line-height:15px;font-size:11px;color:#000;letter-spacing:-0.413px;">120</span><span class="t" style="left:953.47px;top:314.69px;line-height:15px;font-size:11px;color:#000;letter-spacing:-0.413px;">200</span><span class="t" style="left:1037.47px;top:314.69px;line-height:15px;font-size:11px;color:#000;letter-spacing:-0.413px;">200</span><span class="t" style="left:12.00px;top:337.42px;line-height:16.5px;font-size:12.5px;color:#000;transform:scaleX(.84);transform-origin:0 0;">7</span><span class="t" style="left:40.50px;top:334.69px;line-height:15px;font-size:11px;color:#000;letter-spacing:-0.321px;">JYN-123</span><span class="t" style="left:120.50px;top:334.69px;line-height:15px;font-size:11px;color:#000;letter-spacing:-0.272px;">Nagy Mihály</span><span class="t" style="left:199.50px;top:334.69px;line-height:15px;font-size:11px;color:#000;letter-spacing:-0.182px;">071109-BÁCS/1</span><span class="t" style="left:382.50px;top:334.69px;line-height:15px;font-size:11px;color:#000;letter-spacing:-0.080px;">Tervezett</span><span class="t" style="left:437.50px;top:334.69px;line-height:15px;font-size:11px;color:#000;letter-spacing:-0.289px;">Izsák</span><span class="t" style="left:508.50px;top:334.69px;line-height:15px;font-size:11px;color:#000;letter-spacing:-0.250px;">Sólyom u. 2.</span><span class="t" style="left:588.50px;top:334.69px;line-height:15px;font-size:11px;color:#000;letter-spacing:-0.292px;">Nagy Nándor</span><span class="t" style="left:730.47px;top:334.69px;line-height:15px;font-size:11px;color:#000;letter-spacing:-0.413px;">150</span><span class="t" style="left:12.00px;top:357.42px;line-height:16.5px;font-size:12.5px;color:#000;transform:scaleX(.84);transform-origin:0 0;">8</span><span class="t" style="left:40.50px;top:354.69px;line-height:15px;font-size:11px;color:#000;letter-spacing:-0.321px;">JYN-123</span><span class="t" style="left:120.50px;top:354.69px;line-height:15px;font-size:11px;color:#000;letter-spacing:-0.272px;">Nagy Mihály</span><span class="t" style="left:199.50px;top:354.69px;line-height:15px;font-size:11px;color:#000;letter-spacing:-0.182px;">071109-BÁCS/1</span><span class="t" style="left:382.50px;top:354.69px;line-height:15px;font-size:11px;color:#000;letter-spacing:-0.080px;">Tervezett</span><span class="t" style="left:437.50px;top:354.69px;line-height:15px;font-size:11px;color:#000;letter-spacing:-0.296px;">Nagykőrös</span><span class="t" style="left:508.50px;top:354.69px;line-height:15px;font-size:11px;color:#000;letter-spacing:-0.232px;">Szolnoki út 23.</span><span class="t" style="left:588.50px;top:354.69px;line-height:15px;font-size:11px;color:#000;letter-spacing:-0.270px;">Szabó József</span><span class="t" style="left:822.47px;top:354.69px;line-height:15px;font-size:11px;color:#000;letter-spacing:-0.413px;">150</span><span class="t" style="left:12.00px;top:377.42px;line-height:16.5px;font-size:12.5px;color:#000;transform:scaleX(.84);transform-origin:0 0;">9</span><span class="t" style="left:40.50px;top:374.69px;line-height:15px;font-size:11px;color:#000;letter-spacing:-0.321px;">JYN-123</span><span class="t" style="left:120.50px;top:374.69px;line-height:15px;font-size:11px;color:#000;letter-spacing:-0.292px;">Összesen:</span><span class="t" style="left:730.47px;top:374.69px;line-height:15px;font-size:11px;color:#000;letter-spacing:-0.413px;">150</span><span class="t" style="left:822.47px;top:374.69px;line-height:15px;font-size:11px;color:#000;letter-spacing:-0.413px;">150</span><span class="t" style="left:883.88px;top:374.69px;line-height:15px;font-size:11px;color:#000;">0</span><span class="t" style="left:964.88px;top:374.69px;line-height:15px;font-size:11px;color:#000;">0</span><span class="t" style="left:1048.88px;top:374.69px;line-height:15px;font-size:11px;color:#000;">0</span><span class="t" style="left:12.00px;top:397.42px;line-height:16.5px;font-size:12.5px;color:#000;transform:scaleX(.84);transform-origin:0 0;">10</span><span class="t" style="left:40.50px;top:394.69px;line-height:15px;font-size:11px;color:#000;letter-spacing:-0.335px;">KLM-123</span><span class="t" style="left:120.50px;top:394.69px;line-height:15px;font-size:11px;color:#000;letter-spacing:-0.265px;">Szűcs József</span><span class="t" style="left:199.50px;top:394.69px;line-height:15px;font-size:11px;color:#000;letter-spacing:-0.098px;">071109-TÚRA/1</span><span class="t" style="left:382.50px;top:394.69px;line-height:15px;font-size:11px;color:#000;letter-spacing:-0.080px;">Tervezett</span><span class="t" style="left:437.50px;top:394.69px;line-height:15px;font-size:11px;color:#000;letter-spacing:-0.283px;">Nagykanizsa</span><span class="t" style="left:508.50px;top:394.69px;line-height:15px;font-size:11px;color:#000;letter-spacing:-0.234px;">Szőlő u. 7.</span><span class="t" style="left:588.50px;top:394.69px;line-height:15px;font-size:11px;color:#000;letter-spacing:-0.251px;">Kis Jolán</span><span class="t" style="left:730.47px;top:394.69px;line-height:15px;font-size:11px;color:#000;letter-spacing:-0.413px;">150</span><span class="t" style="left:12.00px;top:417.42px;line-height:16.5px;font-size:12.5px;color:#000;transform:scaleX(.84);transform-origin:0 0;">11</span><span class="t" style="left:40.50px;top:414.69px;line-height:15px;font-size:11px;color:#fff;letter-spacing:-0.335px;">KLM-123</span><span class="t" style="left:120.50px;top:414.69px;line-height:15px;font-size:11px;color:#fff;letter-spacing:-0.292px;">Összesen:</span><span class="t" style="left:199.50px;top:414.69px;line-height:15px;font-size:11px;color:#fff;letter-spacing:-0.225px;">Súly korláton (5000-15000 Kg) kívüli!</span><span class="t" style="left:730.47px;top:414.69px;line-height:15px;font-size:11px;color:#000;letter-spacing:-0.413px;">150</span><span class="t" style="left:12.00px;top:437.42px;line-height:16.5px;font-size:12.5px;color:#000;transform:scaleX(.84);transform-origin:0 0;">12</span><span class="t" style="left:40.50px;top:434.69px;line-height:15px;font-size:11px;color:#000;letter-spacing:-0.275px;">Mindösszesen:</span><span class="t" style="left:730.47px;top:434.69px;line-height:15px;font-size:11px;color:#000;letter-spacing:-0.413px;">660</span><span class="t" style="left:822.47px;top:434.69px;line-height:15px;font-size:11px;color:#000;letter-spacing:-0.413px;">225</span><span class="t" style="left:883.88px;top:434.69px;line-height:15px;font-size:11px;color:#000;">0</span><span class="t" style="left:953.47px;top:434.69px;line-height:15px;font-size:11px;color:#000;letter-spacing:-0.413px;">400</span><span class="t" style="left:1037.47px;top:434.69px;line-height:15px;font-size:11px;color:#000;letter-spacing:-0.413px;">200</span><div style="left:8px;top:639px;width:1048px;height:14px;background:repeating-conic-gradient(#fff 0 25%,#ADA8D8 0 50%) 0 0/2px 2px;"></div><div style="left:8px;top:639px;width:14px;height:14px;background:#ADA8D8;border-top:1px solid #D4D0F8;border-left:1px solid #D4D0F8;border-bottom:1px solid #0A0A3C;border-right:1px solid #0A0A3C;box-shadow:inset -1px -1px 0 rgba(10,10,60,.45);"></div><div style="left:1042px;top:639px;width:14px;height:14px;background:#ADA8D8;border-top:1px solid #D4D0F8;border-left:1px solid #D4D0F8;border-bottom:1px solid #0A0A3C;border-right:1px solid #0A0A3C;box-shadow:inset -1px -1px 0 rgba(10,10,60,.45);"></div><div style="left:22px;top:639px;width:850px;height:14px;background:#ADA8D8;border-top:1px solid #D4D0F8;border-left:1px solid #D4D0F8;border-bottom:1px solid #0A0A3C;border-right:1px solid #0A0A3C;box-shadow:inset -1px -1px 0 rgba(10,10,60,.45);"></div><svg style="left:12px;top:642px" width="5" height="8"><path d="M4.5 0.5 L4.5 7.5 L0.5 4 Z" fill="#000"/></svg><svg style="left:1047px;top:642px" width="5" height="8"><path d="M0.5 0.5 L0.5 7.5 L4.5 4 Z" fill="#000"/></svg><div style="left:1056px;top:194px;width:2px;height:462px;background:#D4D0F8;"></div><div style="left:1060px;top:197px;width:206px;height:31px;background:#fff;"></div><span class="t" style="left:1065.00px;top:197.69px;line-height:15px;font-size:11px;color:#000;letter-spacing:-0.119px;">Az árut csak 12:00 óra után tudják</span><span class="t" style="left:1065.50px;top:211.69px;line-height:15px;font-size:11px;color:#000;letter-spacing:-0.182px;">átvenni!!!</span><div style="left:5px;top:654px;width:1053px;height:2px;background:#D4D0F8;"></div><div style="left:5px;top:658px;width:1264px;height:1px;background:#D4D0F8;"></div><div style="left:5px;top:661px;width:1263px;height:1px;background:#0A0A3C;"></div><div style="left:5px;top:662px;width:1263px;height:1px;background:#5A568C;"></div><div style="left:5px;top:663px;width:1263px;height:1px;background:#0A0A3C;"></div><div style="left:5px;top:661px;width:1px;height:80px;background:rgba(10,10,60,.4);"></div><div style="left:6px;top:661px;width:1px;height:80px;background:#0A0A3C;"></div><div style="left:37px;top:684px;width:1230px;height:56px;background:#fff;"></div><div style="left:5px;top:740px;width:1264px;height:1px;background:#D4D0F8;"></div><div style="left:1267px;top:664px;width:2px;height:77px;background:#D4D0F8;"></div><div style="left:7px;top:664px;width:30px;height:20px;border-top:1px solid #D4D0F8;border-left:1px solid #D4D0F8;"></div><div style="left:37px;top:664px;width:202px;height:20px;background:#ADA8D8;border-top:1px solid #D4D0F8;border-left:1px solid #D4D0F8;border-bottom:1px solid #0A0A3C;border-right:1px solid #0A0A3C;box-shadow:inset -1px -1px 0 rgba(10,10,60,.45);"></div><span class="t" style="left:41.50px;top:667.19px;line-height:15px;font-size:11px;color:#000;letter-spacing:-0.339px;">Túra</span><div style="left:239px;top:664px;width:74px;height:20px;background:#ADA8D8;border-top:1px solid #D4D0F8;border-left:1px solid #D4D0F8;border-bottom:1px solid #0A0A3C;border-right:1px solid #0A0A3C;box-shadow:inset -1px -1px 0 rgba(10,10,60,.45);"></div><span class="t" style="left:243.50px;top:667.19px;line-height:15px;font-size:11px;color:#000;letter-spacing:-0.248px;">Túra státusz</span><div style="left:313px;top:664px;width:73px;height:20px;background:#ADA8D8;border-top:1px solid #D4D0F8;border-left:1px solid #D4D0F8;border-bottom:1px solid #0A0A3C;border-right:1px solid #0A0A3C;box-shadow:inset -1px -1px 0 rgba(10,10,60,.45);"></div><span class="t" style="left:317.50px;top:667.19px;line-height:15px;font-size:11px;color:#000;letter-spacing:-0.220px;">Szállítólevél</span><div style="left:386px;top:664px;width:89px;height:20px;background:#ADA8D8;border-top:1px solid #D4D0F8;border-left:1px solid #D4D0F8;border-bottom:1px solid #0A0A3C;border-right:1px solid #0A0A3C;box-shadow:inset -1px -1px 0 rgba(10,10,60,.45);"></div><span class="t" style="left:390.50px;top:667.19px;line-height:15px;font-size:11px;color:#000;letter-spacing:-0.226px;">Előhűtött csirke</span><div style="left:475px;top:664px;width:92px;height:20px;background:#ADA8D8;border-top:1px solid #D4D0F8;border-left:1px solid #D4D0F8;border-bottom:1px solid #0A0A3C;border-right:1px solid #0A0A3C;box-shadow:inset -1px -1px 0 rgba(10,10,60,.45);"></div><span class="t" style="left:479.50px;top:667.19px;line-height:15px;font-size:11px;color:#000;letter-spacing:-0.235px;">Előhűtött pulyka</span><div style="left:567px;top:664px;width:50px;height:20px;background:#ADA8D8;border-top:1px solid #D4D0F8;border-left:1px solid #D4D0F8;border-bottom:1px solid #0A0A3C;border-right:1px solid #0A0A3C;box-shadow:inset -1px -1px 0 rgba(10,10,60,.45);"></div><span class="t" style="left:571.50px;top:667.19px;line-height:15px;font-size:11px;color:#000;letter-spacing:-0.232px;">Élőállat</span><div style="left:617px;top:664px;width:81px;height:20px;background:#ADA8D8;border-top:1px solid #D4D0F8;border-left:1px solid #D4D0F8;border-bottom:1px solid #0A0A3C;border-right:1px solid #0A0A3C;box-shadow:inset -1px -1px 0 rgba(10,10,60,.45);"></div><span class="t" style="left:621.50px;top:667.19px;line-height:15px;font-size:11px;color:#000;letter-spacing:-0.254px;">Fagyos csirke</span><div style="left:698px;top:664px;width:84px;height:20px;background:#ADA8D8;border-top:1px solid #D4D0F8;border-left:1px solid #D4D0F8;border-bottom:1px solid #0A0A3C;border-right:1px solid #0A0A3C;box-shadow:inset -1px -1px 0 rgba(10,10,60,.45);"></div><span class="t" style="left:702.50px;top:667.19px;line-height:15px;font-size:11px;color:#000;letter-spacing:-0.266px;">Fagyos pulyka</span><div style="left:782px;top:664px;width:67px;height:20px;background:#ADA8D8;border-top:1px solid #D4D0F8;border-left:1px solid #D4D0F8;border-bottom:1px solid #0A0A3C;border-right:1px solid #0A0A3C;box-shadow:inset -1px -1px 0 rgba(10,10,60,.45);"></div><span class="t" style="left:786.50px;top:667.19px;line-height:15px;font-size:11px;color:#000;letter-spacing:-0.299px;">Göngyöleg</span><div style="left:849px;top:664px;width:71px;height:20px;background:#ADA8D8;border-top:1px solid #D4D0F8;border-left:1px solid #D4D0F8;border-bottom:1px solid #0A0A3C;border-right:1px solid #0A0A3C;box-shadow:inset -1px -1px 0 rgba(10,10,60,.45);"></div><span class="t" style="left:853.50px;top:667.19px;line-height:15px;font-size:11px;color:#000;letter-spacing:-0.287px;">Készítmény</span><div style="left:920px;top:664px;width:38px;height:20px;background:#ADA8D8;border-top:1px solid #D4D0F8;border-left:1px solid #D4D0F8;border-bottom:1px solid #0A0A3C;border-right:1px solid #0A0A3C;box-shadow:inset -1px -1px 0 rgba(10,10,60,.45);"></div><span class="t" style="left:924.50px;top:667.19px;line-height:15px;font-size:11px;color:#000;letter-spacing:-0.321px;">Súly</span><div style="left:37px;top:684px;width:921px;height:20px;background:#FFFFD0;"></div><div style="left:8px;top:684px;width:29px;height:20px;background:#ADA8D8;border-top:2px solid #0A0A3C;border-left:2px solid #0A0A3C;border-bottom:2px solid #D4D0F8;border-right:2px solid #D4D0F8;"></div><span class="t" style="left:12.00px;top:685.42px;line-height:16.5px;font-size:12.5px;color:#000;font-weight:bold;transform:scaleX(.86);transform-origin:0 0;">1</span><div style="left:238px;top:684px;width:1px;height:20px;background:#ECECC8;"></div><span class="t" style="left:40.50px;top:683.69px;line-height:15px;font-size:11px;color:#000;letter-spacing:-0.280px;">071108-1007_1007_NAGY HÚS KFT./1</span><div style="left:312px;top:684px;width:1px;height:20px;background:#ECECC8;"></div><span class="t" style="left:242.50px;top:683.69px;line-height:15px;font-size:11px;color:#000;letter-spacing:-0.080px;">Tervezett</span><div style="left:385px;top:684px;width:1px;height:20px;background:#ECECC8;"></div><div style="left:474px;top:684px;width:1px;height:20px;background:#ECECC8;"></div><span class="t" style="left:446.71px;top:683.69px;line-height:15px;font-size:11px;color:#000;letter-spacing:-0.310px;">120.0</span><div style="left:566px;top:684px;width:1px;height:20px;background:#ECECC8;"></div><div style="left:616px;top:684px;width:1px;height:20px;background:#ECECC8;"></div><div style="left:697px;top:684px;width:1px;height:20px;background:#ECECC8;"></div><span class="t" style="left:669.71px;top:683.69px;line-height:15px;font-size:11px;color:#000;letter-spacing:-0.310px;">200.0</span><div style="left:781px;top:684px;width:1px;height:20px;background:#ECECC8;"></div><span class="t" style="left:753.71px;top:683.69px;line-height:15px;font-size:11px;color:#000;letter-spacing:-0.310px;">200.0</span><div style="left:848px;top:684px;width:1px;height:20px;background:#ECECC8;"></div><div style="left:919px;top:684px;width:1px;height:20px;background:#ECECC8;"></div><div style="left:957px;top:684px;width:1px;height:20px;background:#ECECC8;"></div><span class="t" style="left:929.71px;top:683.69px;line-height:15px;font-size:11px;color:#000;letter-spacing:-0.310px;">520.0</span><div style="left:37px;top:703px;width:921px;height:1px;background:#ECECC8;"></div><div style="left:1120px;top:743px;width:148px;height:24px;background:#ADA8D8;border-top:1px solid #D4D0F8;border-left:1px solid #D4D0F8;border-bottom:1px solid #0A0A3C;border-right:1px solid #0A0A3C;box-shadow:inset -1px -1px 0 rgba(10,10,60,.45);"></div><span class="t" style="left:1168.00px;top:747.69px;line-height:15px;font-size:11px;color:#000;letter-spacing:-0.312px;">Áthelyezés</span><div style="left:4px;top:773px;width:64px;height:16px;background:#ADA8D8;border-top:1px solid #6C66B4;border-left:1px solid #6C66B4;border-bottom:1px solid #D4D0F8;border-right:1px solid #D4D0F8;"></div><span class="t" style="left:6.00px;top:773.89px;line-height:15px;font-size:11px;color:#000;font-family:'DejaVu Sans Condensed','Liberation Sans',sans-serif;letter-spacing:-0.111px;">-v1.93pre4H</span><div style="left:70px;top:773px;width:126px;height:16px;background:#ADA8D8;border-top:1px solid #6C66B4;border-left:1px solid #6C66B4;border-bottom:1px solid #D4D0F8;border-right:1px solid #D4D0F8;"></div><span class="t" style="left:72.00px;top:773.89px;line-height:15px;font-size:11px;color:#000;font-family:'DejaVu Sans Condensed','Liberation Sans',sans-serif;letter-spacing:-0.303px;">5 / 12</span><div style="left:199px;top:773px;width:23px;height:16px;background:#ADA8D8;border-top:1px solid #6C66B4;border-left:1px solid #6C66B4;border-bottom:1px solid #D4D0F8;border-right:1px solid #D4D0F8;"></div><svg style="left:199px;top:774px" width="14" height="14" viewBox="199 774 14 14"><circle cx="205.5" cy="780.5" r="5" fill="#FFFFF4"/><path d="M202 784.5 A5.3 5.3 0 0 1 209.5 776.6" fill="none" stroke="#101038" stroke-width="1.6"/></svg><div style="left:224px;top:773px;width:1045px;height:16px;background:#ADA8D8;border-top:1px solid #6C66B4;border-left:1px solid #6C66B4;border-bottom:1px solid #D4D0F8;border-right:1px solid #D4D0F8;"></div><span class="t" style="left:225.60px;top:773.69px;line-height:15px;font-size:11px;color:#000;font-family:'DejaVu Sans Condensed','Liberation Sans',sans-serif;letter-spacing:-0.299px;">Rendszám</span><div style="left:0px;top:790px;width:1275px;height:1px;background:rgba(10,10,60,.45);"></div><div style="left:0px;top:791px;width:1275px;height:1px;background:#0A0A3C;"></div><div style="left:0px;top:795px;width:1280px;height:1px;background:#D4D0F8;"></div>
</body></html>
